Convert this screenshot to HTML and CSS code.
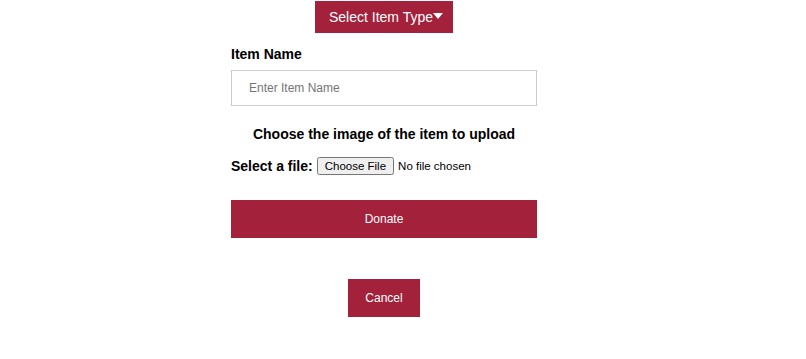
FILE: index.html
```html
<!DOCTYPE html>
<html lang="en">
<head>
    <meta charset="UTF-8">
    <meta name="viewport" content="width=device-width, initial-scale=1.0">
    <title>Donate an Item</title>
    <link rel="stylesheet" href="styles.css">
</head>
<body>
    <div class="page">
        <button class="type-btn" type="button">Select Item Type<span class="caret"></span></button>

        <form class="donate-form">
            <label class="field-label" for="item-name">Item Name</label>
            <input class="text-input" id="item-name" type="text" placeholder="Enter Item Name">

            <h3 class="upload-title">Choose the image of the item to upload</h3>
            <div class="file-row">
                <label class="field-label" for="item-image">Select a file:</label>
                <input class="file-input" id="item-image" type="file">
            </div>

            <button class="btn btn-wide" type="submit">Donate</button>
        </form>

        <button class="btn btn-cancel" type="button">Cancel</button>
    </div>
</body>
</html>
```

FILE: styles.css
```css
body {
    font-family: "Liberation Sans", Arial, sans-serif;
    background-color: #fff;
    color: #000;
    margin: 0;
    padding: 0;
}

.page {
    width: 768px;
    display: flex;
    flex-direction: column;
    align-items: center;
}

.type-btn {
    margin-top: 1px;
    height: 32px;
    padding: 0 10px 0 14px;
    border: none;
    background-color: #a3213a;
    color: white;
    font-family: inherit;
    font-size: 14px;
    display: flex;
    align-items: center;
}

.caret {
    width: 0;
    height: 0;
    border-left: 5px solid transparent;
    border-right: 5px solid transparent;
    border-top: 6px solid white;
    margin-bottom: 3px;
}

.donate-form {
    width: 306px;
    display: flex;
    flex-direction: column;
}

.field-label {
    font-size: 14px;
    font-weight: bold;
    line-height: 17px;
    white-space: nowrap;
}

.donate-form > .field-label {
    margin-top: 13px;
}

.text-input {
    margin-top: 7px;
    height: 36px;
    box-sizing: border-box;
    border: 1px solid #ccc;
    padding: 0 17px;
    font-family: inherit;
    font-size: 12px;
}

.text-input::placeholder {
    color: #757575;
}

.upload-title {
    margin: 20px 0 0;
    font-size: 14px;
    line-height: 17px;
    text-align: center;
}

.file-row {
    margin-top: 14px;
    display: flex;
    align-items: center;
    gap: 4px;
}

.file-input {
    font-family: inherit;
    font-size: 11.5px;
}

.btn {
    height: 38px;
    border: none;
    background-color: #a3213a;
    color: white;
    font-family: inherit;
    font-size: 12px;
}

.btn-wide {
    margin-top: 25px;
    width: 100%;
}

.btn-cancel {
    margin-top: 41px;
    width: 72px;
}
```
